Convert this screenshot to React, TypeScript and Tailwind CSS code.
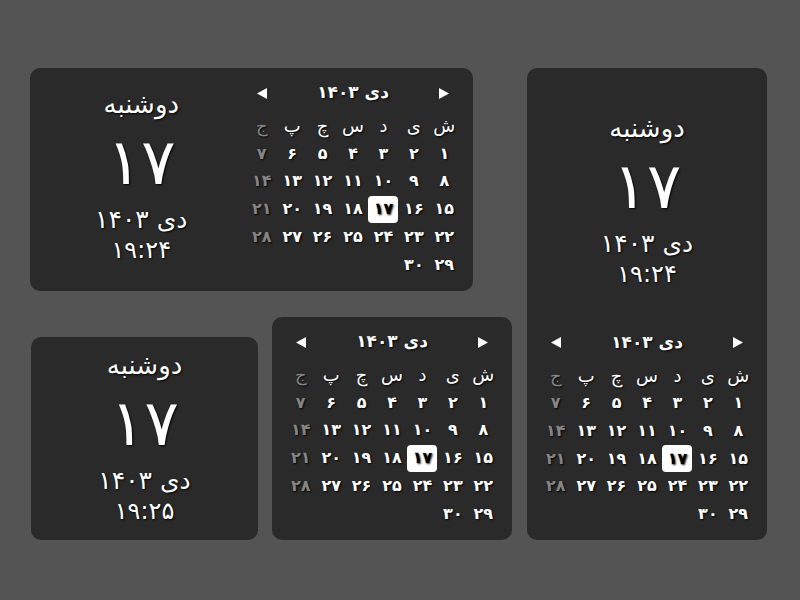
import React from "react";

const fa = (n: number) => String(n).replace(/\d/g, (d) => "۰۱۲۳۴۵۶۷۸۹"[Number(d)]);

const shadow = "[text-shadow:1px_1px_2px_rgba(0,0,0,0.95)]";

function DateBlock({ time }: { time: string }) {
  return (
    <div dir="rtl" className={`flex flex-col items-center text-white ${shadow}`}>
      <div className="text-[26px] leading-[30px] mb-[2px]">دوشنبه</div>
      <div className="text-[64px] leading-[83px] h-[83px]">{fa(17)}</div>
      <div className="text-[25px] leading-[31px]">دی {fa(1403)}</div>
      <div className="text-[24px] leading-[31px]">{time}</div>
    </div>
  );
}

function Tri({ dir }: { dir: "l" | "r" }) {
  return (
    <svg width="10" height="11" viewBox="0 0 10 11" className="block">
      {dir === "l" ? (
        <polygon points="10,0 10,11 0,5.5" fill="white" />
      ) : (
        <polygon points="0,0 0,11 10,5.5" fill="white" />
      )}
    </svg>
  );
}

const weekdays = ["ش", "ی", "د", "س", "چ", "پ", "ج"];

function Calendar() {
  const cells: number[] = [];
  for (let i = 1; i <= 30; i++) cells.push(i);
  return (
    <div className={`w-[213px] pt-3 pb-[12px] text-white ${shadow}`}>
      <div className="flex h-[26px] items-center justify-between">
        <span className="flex w-[30.5px] justify-center">
          <Tri dir="l" />
        </span>
        <span dir="rtl" className="text-[17px] font-bold">
          دی {fa(1403)}
        </span>
        <span className="flex w-[30.5px] justify-center">
          <Tri dir="r" />
        </span>
      </div>
      <div dir="rtl" className="mt-[6px] grid grid-cols-7">
        {weekdays.map((w, i) => (
          <div
            key={w}
            className={`flex h-[27.75px] items-center justify-center text-[18px] ${
              i === 6 ? "text-[#858585]" : "text-white"
            }`}
          >
            {w}
          </div>
        ))}
        {cells.map((d, i) => {
          const fri = i % 7 === 6;
          const today = d === 17;
          return (
            <div key={i} className="flex h-[27.75px] items-center justify-center">
              <span
                className={`flex h-[27px] w-[30px] items-center justify-center rounded-[4px] text-[16px] font-bold ${
                  today ? "bg-white text-black" : fri ? "text-[#858585]" : "text-white"
                }`}
              >
                {fa(d)}
              </span>
            </div>
          );
        })}
      </div>
    </div>
  );
}

export default function App() {
  return (
    <div
      className="flex h-[600px] w-[800px] bg-[#545454] pl-[30px] pt-[68px]"
      style={{ fontFamily: '"DejaVu Sans", sans-serif' }}
    >
      <div className="flex w-[482px] flex-col gap-[26px]">
        <div className="flex h-[223px] w-[443px] rounded-[10px] bg-[#2a2a2a]">
          <div className="flex flex-1 items-center justify-center pb-[5px] pl-[6px]">
            <DateBlock time={`${fa(19)}:${fa(24)}`} />
          </div>
          <div className="pr-[13.5px]">
            <Calendar />
          </div>
        </div>
        <div className="flex items-end gap-[14px]">
          <div className="ml-px flex h-[203px] w-[227px] items-center justify-center rounded-[10px] bg-[#2a2a2a]">
            <DateBlock time={`${fa(19)}:${fa(25)}`} />
          </div>
          <div className="flex h-[223px] w-[240px] justify-center rounded-[10px] bg-[#2a2a2a]">
            <Calendar />
          </div>
        </div>
      </div>
      <div className="ml-[15px] flex h-[472px] w-[240px] flex-col items-center rounded-[10px] bg-[#2a2a2a]">
        <div className="pt-[45px]">
          <DateBlock time={`${fa(19)}:${fa(24)}`} />
        </div>
        <div className="mt-auto">
          <Calendar />
        </div>
      </div>
    </div>
  );
}
